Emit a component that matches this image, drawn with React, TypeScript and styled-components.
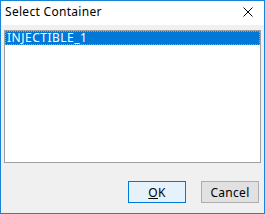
import React from "react";
import styled, { createGlobalStyle } from "styled-components";

const Global = createGlobalStyle`
  html, body { margin: 0; padding: 0; background: #ffffff; }
  body { font-family: "Noto Sans", "Open Sans", sans-serif; }
`;

const Window = styled.div`
  width: 265px;
  height: 214px;
  box-sizing: border-box;
  border: 1px solid #1883d7;
  background: #f0f0f0;
  display: flex;
  flex-direction: column;
  font-family: "Noto Sans", "Open Sans", sans-serif;
  font-size: 12px;
  color: #000;
`;

const TitleBar = styled.div`
  height: 24px;
  flex: none;
  background: #ffffff;
  display: flex;
  align-items: center;
  justify-content: space-between;
  padding: 0 11px 0 4px;
`;

const Title = styled.span`
  font-size: 12px;
  letter-spacing: 0.3px;
  line-height: 16px;
  margin-top: -3px;
`;

const CloseBox = styled.div`
  width: 10px;
  height: 10px;
  margin-top: -2px;
  display: flex;
`;

const Body = styled.div`
  flex: 1;
  display: flex;
  flex-direction: column;
  padding: 5px 3px 10px 3px;
`;

const ListBox = styled.div`
  height: 133px;
  box-sizing: border-box;
  border: 1px solid #a0a0a0;
  background: #ffffff;
  padding: 0;
`;

const Row = styled.div<{ $selected?: boolean }>`
  height: 14px;
  box-sizing: border-box;
  background: ${(p) => (p.$selected ? "#0078d7" : "transparent")};
  color: ${(p) => (p.$selected ? "#ffffff" : "#000")};
  border: 1px dotted ${(p) => (p.$selected ? "#ff8728" : "transparent")};
  display: flex;
  align-items: center;
  padding-left: 1px;
  font-size: 12px;
  letter-spacing: 0.5px;
  line-height: 12px;
`;

const Buttons = styled.div`
  margin-top: auto;
  display: flex;
  justify-content: flex-end;
  gap: 15px;
  padding-right: 2px;
`;

const Button = styled.button<{ $default?: boolean }>`
  width: 58px;
  height: 22px;
  box-sizing: border-box;
  border: 1px solid ${(p) => (p.$default ? "#0078d7" : "#adadad")};
  background: ${(p) => (p.$default ? "#e5f1fb" : "#e1e1e1")};
  font-family: "Noto Sans", "Open Sans", sans-serif;
  font-size: 12px;
  letter-spacing: 0.3px;
  color: #000;
  padding: 0;
  margin: 0;
  display: flex;
  align-items: center;
  justify-content: center;
`;

const Accel = styled.span`
  text-decoration: underline;
`;

export default function App() {
  return (
    <>
      <Global />
      <Window>
        <TitleBar>
          <Title>Select Container</Title>
          <CloseBox>
            <svg width="10" height="10" viewBox="0 0 10 10">
              <path d="M0.5 0.5 L9.5 9.5 M9.5 0.5 L0.5 9.5" stroke="#000" strokeWidth="1" />
            </svg>
          </CloseBox>
        </TitleBar>
        <Body>
          <ListBox>
            <Row $selected>INJECTIBLE_1</Row>
          </ListBox>
          <Buttons>
            <Button $default>
              <span>
                <Accel>O</Accel>K
              </span>
            </Button>
            <Button>Cancel</Button>
          </Buttons>
        </Body>
      </Window>
    </>
  );
}
